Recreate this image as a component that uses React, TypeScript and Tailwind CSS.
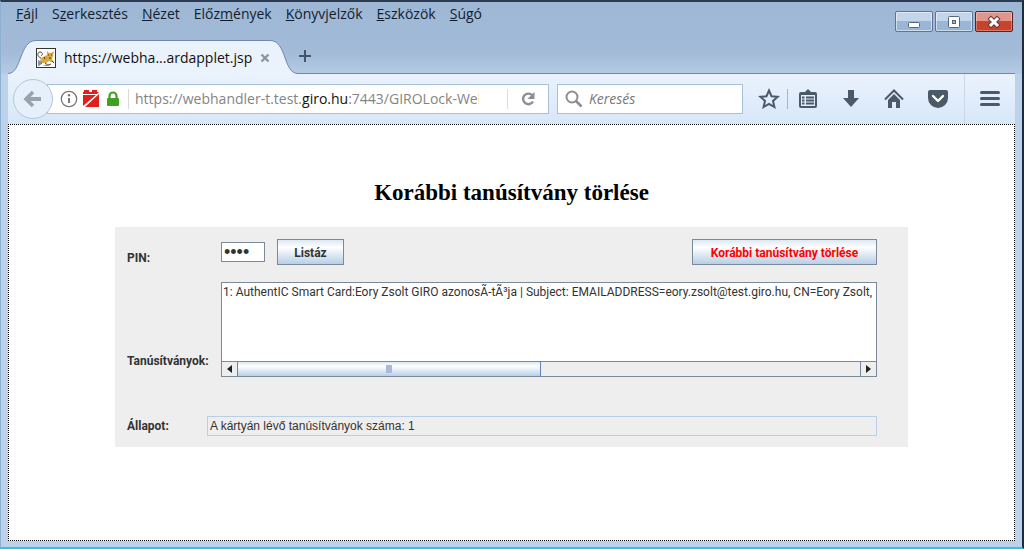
import type { ReactNode } from "react";

interface IconButtonProps {
  label: string;
  className?: string;
  children: ReactNode;
}

const menus = [
  { before: "", key: "F", after: "ájl" },
  { before: "S", key: "z", after: "erkesztés" },
  { before: "", key: "N", after: "ézet" },
  { before: "Előz", key: "m", after: "ények" },
  { before: "", key: "K", after: "önyvjelzők" },
  { before: "", key: "E", after: "szközök" },
  { before: "", key: "S", after: "úgó" },
];

const certificates = [
  "1: AuthentIC Smart Card:Eory Zsolt GIRO azonosÃ-tÃ³ja | Subject: EMAILADDRESS=eory.zsolt@test.giro.hu, CN=Eory Zsolt,",
];

function IconButton({ label, className = "w-6", children }: IconButtonProps) {
  return (
    <button
      type="button"
      aria-label={label}
      className={`flex h-6 shrink-0 items-center justify-center ${className}`}
    >
      {children}
    </button>
  );
}

function WindowButtons() {
  const base =
    "flex h-[21px] w-[38px] items-center justify-center rounded-[2px] border";
  const blue =
    "border-[#5d7594] bg-linear-to-b from-[#c3d5ea] from-50% to-[#9ab6d6] to-50% shadow-[inset_0_0_0_1px_rgba(255,255,255,0.5)]";

  return (
    <div className="flex gap-[2px] pt-[9px] pr-[2px]">
      <button type="button" aria-label="Kis méret" className={`${base} ${blue}`}>
        <svg width="14" height="14" viewBox="0 0 14 14">
          <rect x="1.5" y="7.5" width="11" height="5" rx="1" fill="#fff" stroke="#54657d" />
        </svg>
      </button>
      <button type="button" aria-label="Teljes méret" className={`${base} ${blue}`}>
        <svg width="14" height="14" viewBox="0 0 14 14">
          <rect x="1.5" y="1.5" width="11" height="11" rx="1" fill="#fff" stroke="#54657d" />
          <rect x="5.5" y="5.5" width="3" height="3" fill="#9db5d0" stroke="#54657d" />
        </svg>
      </button>
      <button
        type="button"
        aria-label="Bezárás"
        className={`${base} border-[#5b2029] bg-linear-to-b from-[#e0968a] from-50% to-[#c8432b] to-50% shadow-[inset_0_0_0_1px_rgba(255,255,255,0.3)]`}
      >
        <svg width="14" height="14" viewBox="0 0 14 14" strokeLinecap="square">
          <path d="M4 4l6 6M10 4l-6 6" stroke="#6b3a3c" strokeWidth="5" />
          <path d="M4 4l6 6M10 4l-6 6" stroke="#fff" strokeWidth="3" />
        </svg>
      </button>
    </div>
  );
}

function CatIcon() {
  return (
    <svg width="20" height="20" viewBox="0 0 20 20" className="shrink-0">
      <rect x=".5" y=".5" width="19" height="19" fill="#fff" stroke="#333" />
      <path d="M5 10l4-2 2-1 0-4 2 2h2l3-2-1 5-1 3 2 3-3 0-2-1-3 2-5 0-1-2z" fill="#dda843" />
      <path d="M5 10C1 9 1 4 4 4s3 3 1 4" fill="none" stroke="#4b4130" />
      <path d="M6 15l-3 2M9 15l3 2 3-1M16 13l2 2" fill="none" stroke="#6a4a18" />
      <path d="M12 7h1M15 7h1M8 9l1 2M13 10h2" stroke="#4a3512" />
      <path d="M2 12l4 2-3 4H2zM7 18l4-2 3 2z" fill="#7796a8" />
    </svg>
  );
}

function TabStrip() {
  return (
    <div className="flex h-[34px] items-end border-b border-[#6d89ad]">
      <div className="-mb-px flex h-[34px]">
        <svg width="28" height="34" viewBox="0 0 28 34">
          <path d="M0 34V33.5C14 33.5 11 .5 28 .5V34z" fill="#eaf3fc" />
          <path d="M0 33.5C14 33.5 11 .5 28 .5" fill="none" stroke="#6d89ad" />
        </svg>
        <div className="flex items-center border-t border-[#6d89ad] bg-[#eaf3fc]">
          <CatIcon />
          <span className="ml-2 text-sm whitespace-nowrap text-[#111]">
            https://webha...ardapplet.jsp
          </span>
          <button type="button" aria-label="Lap bezárása" className="ml-2">
            <svg width="10" height="10" viewBox="0 0 10 10">
              <path d="M1.5 1.5l7 7M8.5 1.5l-7 7" stroke="#8c959f" strokeWidth="2.4" />
            </svg>
          </button>
        </div>
        <svg width="28" height="34" viewBox="0 0 28 34">
          <path d="M0 .5C17 .5 13 33.5 28 33.5V34H0z" fill="#eaf3fc" />
          <path d="M0 .5C17 .5 13 33.5 28 33.5" fill="none" stroke="#6d89ad" />
        </svg>
      </div>
      <button type="button" aria-label="Új lap" className="mb-[10px]">
        <svg width="14" height="14" viewBox="0 0 14 14">
          <path d="M7 1v12M1 7h12" stroke="#44566c" strokeWidth="2" />
        </svg>
      </button>
    </div>
  );
}

function AddressBar() {
  return (
    <div className="flex min-w-0 flex-1 items-center">
      <button
        type="button"
        aria-label="Vissza"
        className="z-10 -mr-[6px] flex h-10 w-10 shrink-0 items-center justify-center rounded-full border border-[#b4c6db] bg-[#e6f0fb]"
      >
        <svg width="20" height="20" viewBox="0 0 20 20" fill="none" stroke="#9aa3ad">
          <path d="M10 3l-7 7 7 7" strokeWidth="3.6" />
          <path d="M4 10h14" strokeWidth="4" />
        </svg>
      </button>
      <div className="flex h-[30px] min-w-0 flex-1 items-center border border-[#a9bfd8] bg-white pl-3">
        <svg width="18" height="18" viewBox="0 0 18 18" className="shrink-0">
          <circle cx="9" cy="9" r="7.7" fill="none" stroke="#777" strokeWidth="1.3" />
          <path d="M9 8v5" stroke="#777" strokeWidth="2" />
          <circle cx="9" cy="5.3" r="1.2" fill="#777" />
        </svg>
        <svg width="18" height="18" viewBox="0 0 18 18" className="ml-1 shrink-0">
          <path d="M1 4V2h1V0h5v2h3V0h5v2h2L15 4z" fill="#de1f1b" />
          <path d="M1 5h13L1 16zM17 4v13H3z" fill="#de1f1b" />
        </svg>
        <svg width="14" height="16" viewBox="0 0 14 16" className="ml-[6px] shrink-0">
          <path d="M3.5 8V5a3.5 3.5 0 017 0v3" fill="none" stroke="#42a021" strokeWidth="2.2" />
          <rect x="1" y="7" width="12" height="8" rx="1" fill="#42a021" />
        </svg>
        <div className="ml-2 mr-[6px] h-5 w-px shrink-0 bg-[#d8d8d8]" />
        <div className="min-w-0 flex-1 overflow-hidden text-sm whitespace-nowrap text-[#848484]">
          https://webhandler-t.test.<span className="text-[#111]">giro.hu</span>
          :7443/GIROLock-Web
        </div>
        <div className="ml-7 h-5 w-px shrink-0 bg-[#dedede]" />
        <IconButton label="Frissítés" className="w-10">
          <svg width="16" height="16" viewBox="0 0 16 16">
            <path d="M12 4A5.3 5.3 0 1 0 13 10.5" fill="none" stroke="#8a8f96" strokeWidth="2.4" />
            <path d="M14.5 1v7h-7z" fill="#8a8f96" />
          </svg>
        </IconButton>
      </div>
    </div>
  );
}

function Toolbar() {
  return (
    <div className="flex h-[50px] items-center bg-linear-to-b from-[#eaf3fc] to-[#d7e7f8] pl-[5px]">
      <AddressBar />
      <label className="ml-2 flex h-[30px] w-[186px] items-center border border-[#a9bfd8] bg-white pl-[7px]">
        <svg width="18" height="18" viewBox="0 0 18 18" fill="none" stroke="#8b8f94" className="shrink-0">
          <circle cx="7" cy="7" r="5.5" strokeWidth="2" />
          <path d="M11 11l5.5 5.5" strokeWidth="2.6" />
        </svg>
        <input
          type="text"
          aria-label="Keresés"
          placeholder="Keresés"
          className="ml-[6px] w-full min-w-0 text-sm italic outline-none placeholder:text-[#777]"
        />
      </label>
      <div className="ml-3 flex items-center text-[#4c5967]">
        <IconButton label="Könyvjelző" className="w-7">
          <svg width="22" height="22" viewBox="0 0 22 22">
            <path
              d="M11 2.5l2.5 5.7 6.2.6-4.7 4.1 1.4 6.1L11 15.8 5.6 19 7 12.9 2.3 8.8l6.2-.6z"
              fill="none"
              stroke="currentColor"
              strokeWidth="2"
            />
          </svg>
        </IconButton>
        <div className="ml-1 h-5 w-px bg-[#a8b4c2]" />
        <IconButton label="Könyvjelzők listája" className="ml-2 w-6">
          <svg width="20" height="20" viewBox="0 0 20 20">
            <path d="M6 4l4-4 4 4" fill="currentColor" />
            <rect x="2" y="4" width="16" height="14" rx="1" fill="none" stroke="currentColor" strokeWidth="2" />
            <path d="M3 5h14M4 8.5h2.5M8 8.5h8M4 11.5h2.5M8 11.5h8M4 14.5h2.5M8 14.5h8" stroke="currentColor" strokeWidth="1.8" />
          </svg>
        </IconButton>
        <IconButton label="Letöltések" className="ml-[19px] w-6">
          <svg width="18" height="18" viewBox="0 0 18 18">
            <path d="M6 0h6v8h5l-8 9-8-9h5z" fill="currentColor" />
          </svg>
        </IconButton>
        <IconButton label="Kezdőlap" className="ml-[19px] w-6">
          <svg width="20" height="20" viewBox="0 0 20 20">
            <path d="M1 10.5l9-9 9 9" fill="none" stroke="currentColor" strokeWidth="2" />
            <path d="M4 11l6-6 6 6v8h-4v-6H8v6H4z" fill="currentColor" />
          </svg>
        </IconButton>
        <IconButton label="Pocket" className="ml-5 w-6">
          <svg width="22" height="20" viewBox="0 0 22 20">
            <path d="M3 1h16q2 0 2 2v6a10 10 0 01-20 0V3q0-2 2-2z" fill="currentColor" />
            <path d="M6 7l5 5 5-5" fill="none" stroke="#fff" strokeWidth="2.4" strokeLinecap="round" strokeLinejoin="round" />
          </svg>
        </IconButton>
      </div>
      <div className="ml-[14px] h-[50px] w-px bg-[#c9d7e8]" />
      <IconButton label="Menü" className="w-[50px] text-[#4c5967]">
        <svg width="20" height="18" viewBox="0 0 20 18">
          <path d="M1.5 2.5h17M1.5 8.5h17M1.5 14.5h17" stroke="currentColor" strokeWidth="3" strokeLinecap="round" />
        </svg>
      </IconButton>
    </div>
  );
}

function CertificateList() {
  return (
    <div className="flex h-[95px] min-w-0 flex-1 flex-col border border-[#7a8a99] bg-white">
      <ul className="flex-1 overflow-hidden pt-px pl-px">
        {certificates.map((item) => (
          <li key={item} className="text-xs whitespace-nowrap">
            {item}
          </li>
        ))}
      </ul>
      <div className="flex h-[15px] border-t border-[#7a8a99] bg-[#eee]">
        <button
          type="button"
          aria-label="Balra"
          className="flex w-[15px] items-center justify-center"
        >
          <svg width="5" height="8" viewBox="0 0 5 8">
            <path d="M5 0v8L0 4z" fill="#222" />
          </svg>
        </button>
        <div className="flex flex-1">
          <div className="flex w-[304px] items-center justify-center border-x border-[#6382bf] bg-linear-to-b from-[#dbe7f4] via-white via-30% to-[#b8cfe5]">
            <div className="h-2 w-[6px] bg-[#a9b9d8]" />
          </div>
        </div>
        <button
          type="button"
          aria-label="Jobbra"
          className="flex w-4 items-center justify-center border-l border-[#7a8a99]"
        >
          <svg width="5" height="8" viewBox="0 0 5 8">
            <path d="M0 0v8l5-4z" fill="#222" />
          </svg>
        </button>
      </div>
    </div>
  );
}

function CertificateForm() {
  const button =
    "h-[26px] border border-[#7a8a99] bg-linear-to-b from-[#dde8f3] via-white via-30% to-[#b8cfe5] pt-px text-xs font-bold";

  return (
    <form className="mx-auto w-full max-w-[793px] bg-[#eee] pt-3 pr-[31px] pb-[11px] pl-3 font-[Roboto,'Liberation_Sans',sans-serif] text-xs text-[#333]">
      <div className="flex h-[26px] items-center">
        <label htmlFor="pin" className="w-[94px] shrink-0 pt-3 font-bold">
          PIN:
        </label>
        <input
          id="pin"
          type="password"
          defaultValue="0000"
          className="h-5 w-11 border border-[#7a8a99] bg-white px-[2px] font-['Liberation_Sans',Arial,sans-serif] text-lg outline-none"
        />
        <button type="button" className={`${button} ml-3 w-[67px]`}>
          Listáz
        </button>
        <button type="button" className={`${button} ml-auto w-[185px] text-[#f00]`}>
          Korábbi tanúsítvány törlése
        </button>
      </div>

      <div className="mt-[17px] flex items-end">
        <div className="w-[94px] shrink-0 pb-2 font-bold">Tanúsítványok:</div>
        <CertificateList />
      </div>

      <div className="mt-[39px] flex items-center">
        <label htmlFor="status" className="w-20 shrink-0 font-bold">
          Állapot:
        </label>
        <input
          id="status"
          type="text"
          readOnly
          defaultValue="A kártyán lévő tanúsítványok száma: 1"
          className="h-5 min-w-0 flex-1 border border-[#b8cfe5] px-[2px] font-['Liberation_Sans',Arial,sans-serif] outline-none"
        />
      </div>
    </form>
  );
}

export default function App() {
  return (
    <div className="flex min-h-screen flex-col border-t-2 border-r-2 border-b-2 border-l border-t-[#2c3a52] border-r-[#1d2b3e] border-b-[#2fc4e6] border-l-[#8fb0d0] bg-[#bcd2ea] px-[7px] pb-[6px] font-['Open_Sans','Noto_Sans',sans-serif]">
      <header className="-mx-[7px] bg-linear-to-b from-[#9db7d5] via-[#a3bbd8] via-70% to-[#b5cbe5] px-[7px]">
        <div className="flex h-[38px] items-start justify-between">
          <nav className="flex gap-[14px] pt-[2px] pl-2">
            {menus.map(({ before, key, after }) => (
              <button key={key + after} type="button" className="text-sm text-[#111d2e]">
                {before}
                <span className="underline">{key}</span>
                {after}
              </button>
            ))}
          </nav>
          <WindowButtons />
        </div>
        <TabStrip />
      </header>
      <Toolbar />
      <main className="flex-1 border border-dotted border-black bg-white px-4">
        <h1 className="pt-[53px] pb-[19px] text-center font-['Liberation_Serif','Times_New_Roman',serif] text-[23px] leading-[30px] font-bold text-black">
          Korábbi tanúsítvány törlése
        </h1>
        <CertificateForm />
      </main>
    </div>
  );
}
